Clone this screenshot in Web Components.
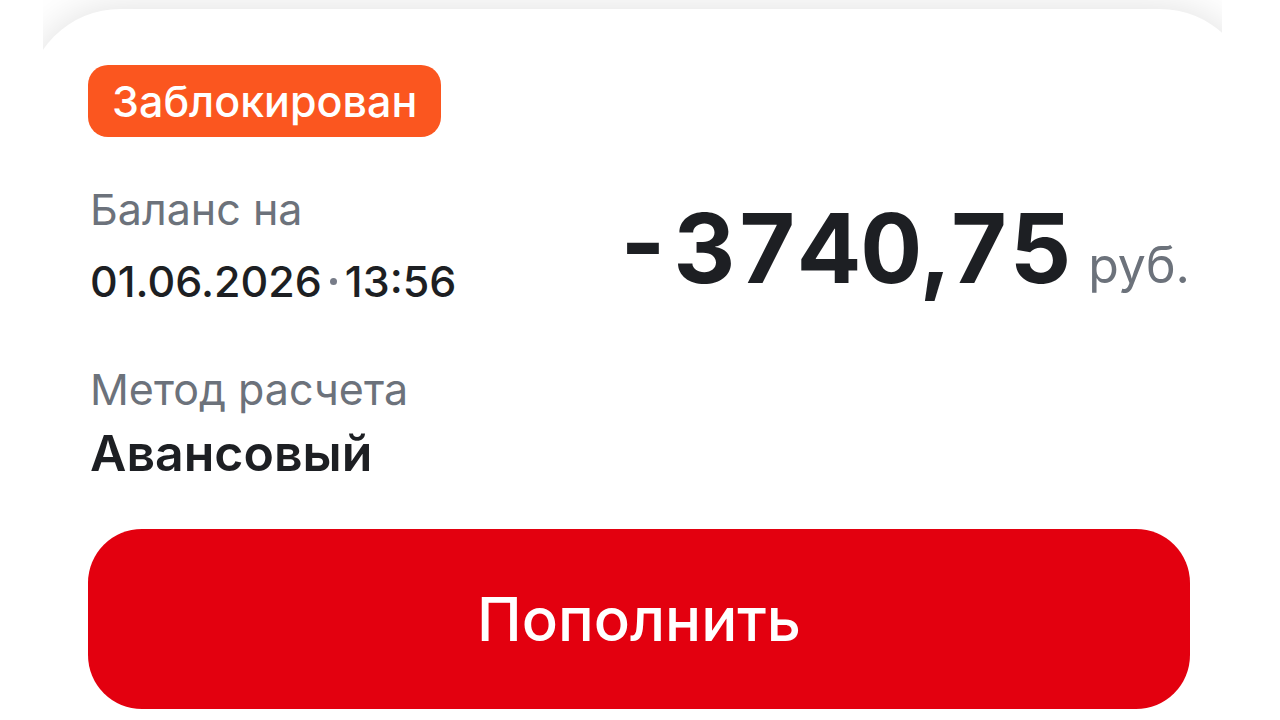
<!DOCTYPE html>
<html lang="ru">
<head>
<meta charset="utf-8">
<meta name="viewport" content="width=device-width, initial-scale=1">
<title>Баланс</title>
<style>
  body { margin: 0; background: #fff; font-family: Inter, "Noto Sans", sans-serif; color: #1d1f23; }
</style>
</head>
<body>
<account-screen>
  <status-badge>Заблокирован</status-badge>
  <account-summary>
    <balance-date date="01.06.2026" time="13:56">Баланс на</balance-date>
    <balance-amount currency="руб.">-3740,75</balance-amount>
  </account-summary>
  <payment-method label="Метод расчета">Авансовый</payment-method>
  <action-button>Пополнить</action-button>
</account-screen>

<script>
class BaseElement extends HTMLElement {
  constructor() {
    super();
    const template = document.createElement('template');
    template.innerHTML = this.constructor.markup;
    this.attachShadow({ mode: 'open' }).append(template.content.cloneNode(true));
  }
  connectedCallback() {
    for (const node of this.shadowRoot.querySelectorAll('[data-attr]')) {
      node.textContent = this.getAttribute(node.dataset.attr) || '';
    }
  }
}

customElements.define('account-screen', class extends BaseElement {
  static markup = `
    <style>
      :host { display: block; margin: 0 58px 0 43px; overflow: hidden; padding-top: 9px; }
      main {
        display: flex; flex-direction: column; align-items: stretch;
        margin: 0 -31px 0 -16px; padding: 56px 63px 11px 61px;
        border-radius: 93px 93px 0 0; background: #fff;
        box-shadow: 0 0 40px rgba(0, 0, 0, .13);
      }
    </style>
    <main><slot></slot></main>`;
});

customElements.define('status-badge', class extends BaseElement {
  static markup = `
    <style>
      :host {
        display: block; align-self: flex-start; padding: 0 24px;
        border-radius: 20px; background: #fb561f; color: #fff;
        font-size: 43px; font-weight: 500; line-height: 72px;
      }
    </style>
    <slot></slot>`;
});

customElements.define('account-summary', class extends BaseElement {
  static markup = `
    <style>
      :host { display: flex; justify-content: space-between; align-items: flex-start; margin-top: 36px; padding-left: 2px; }
    </style>
    <slot></slot>`;
});

customElements.define('balance-date', class extends BaseElement {
  static markup = `
    <style>
      :host { display: block; font-size: 43px; line-height: 72px; white-space: nowrap; }
      .label { color: #6c727b; }
      .when { display: flex; align-items: center; gap: 8px; font-weight: 500; }
      .dot { width: 7px; height: 7px; border-radius: 50%; background: #777c88; }
    </style>
    <div class="label"><slot></slot></div>
    <div class="when"><span data-attr="date"></span><i class="dot"></i><span data-attr="time"></span></div>`;
});

customElements.define('balance-amount', class extends BaseElement {
  static markup = `
    <style>
      :host { display: flex; align-items: baseline; gap: 16px; white-space: nowrap; }
      .sum { font-size: 96px; font-weight: 700; line-height: 150px; font-variant-numeric: tabular-nums; }
      .currency { font-size: 50px; color: #6c727b; }
    </style>
    <span class="sum"><slot></slot></span><span class="currency" data-attr="currency"></span>`;
});

customElements.define('payment-method', class extends BaseElement {
  static markup = `
    <style>
      :host { display: block; margin-top: 30px; padding-left: 2px; }
      .label { font-size: 43px; line-height: 72px; color: #6c727b; }
      .value { font-size: 50px; line-height: 56px; font-weight: 600; }
    </style>
    <div class="label" data-attr="label"></div>
    <div class="value"><slot></slot></div>`;
});

customElements.define('action-button', class extends BaseElement {
  static markup = `
    <style>
      :host { display: block; margin-top: 48px; }
      button {
        display: block; width: 100%; min-height: 180px; margin: 0; padding: 0 24px;
        border: 0; border-radius: 54px; background: #e3000f; color: #fff;
        font: 500 60px/72px Inter, "Noto Sans", sans-serif; cursor: pointer;
      }
    </style>
    <button type="button"><slot></slot></button>`;
});
</script>
</body>
</html>
